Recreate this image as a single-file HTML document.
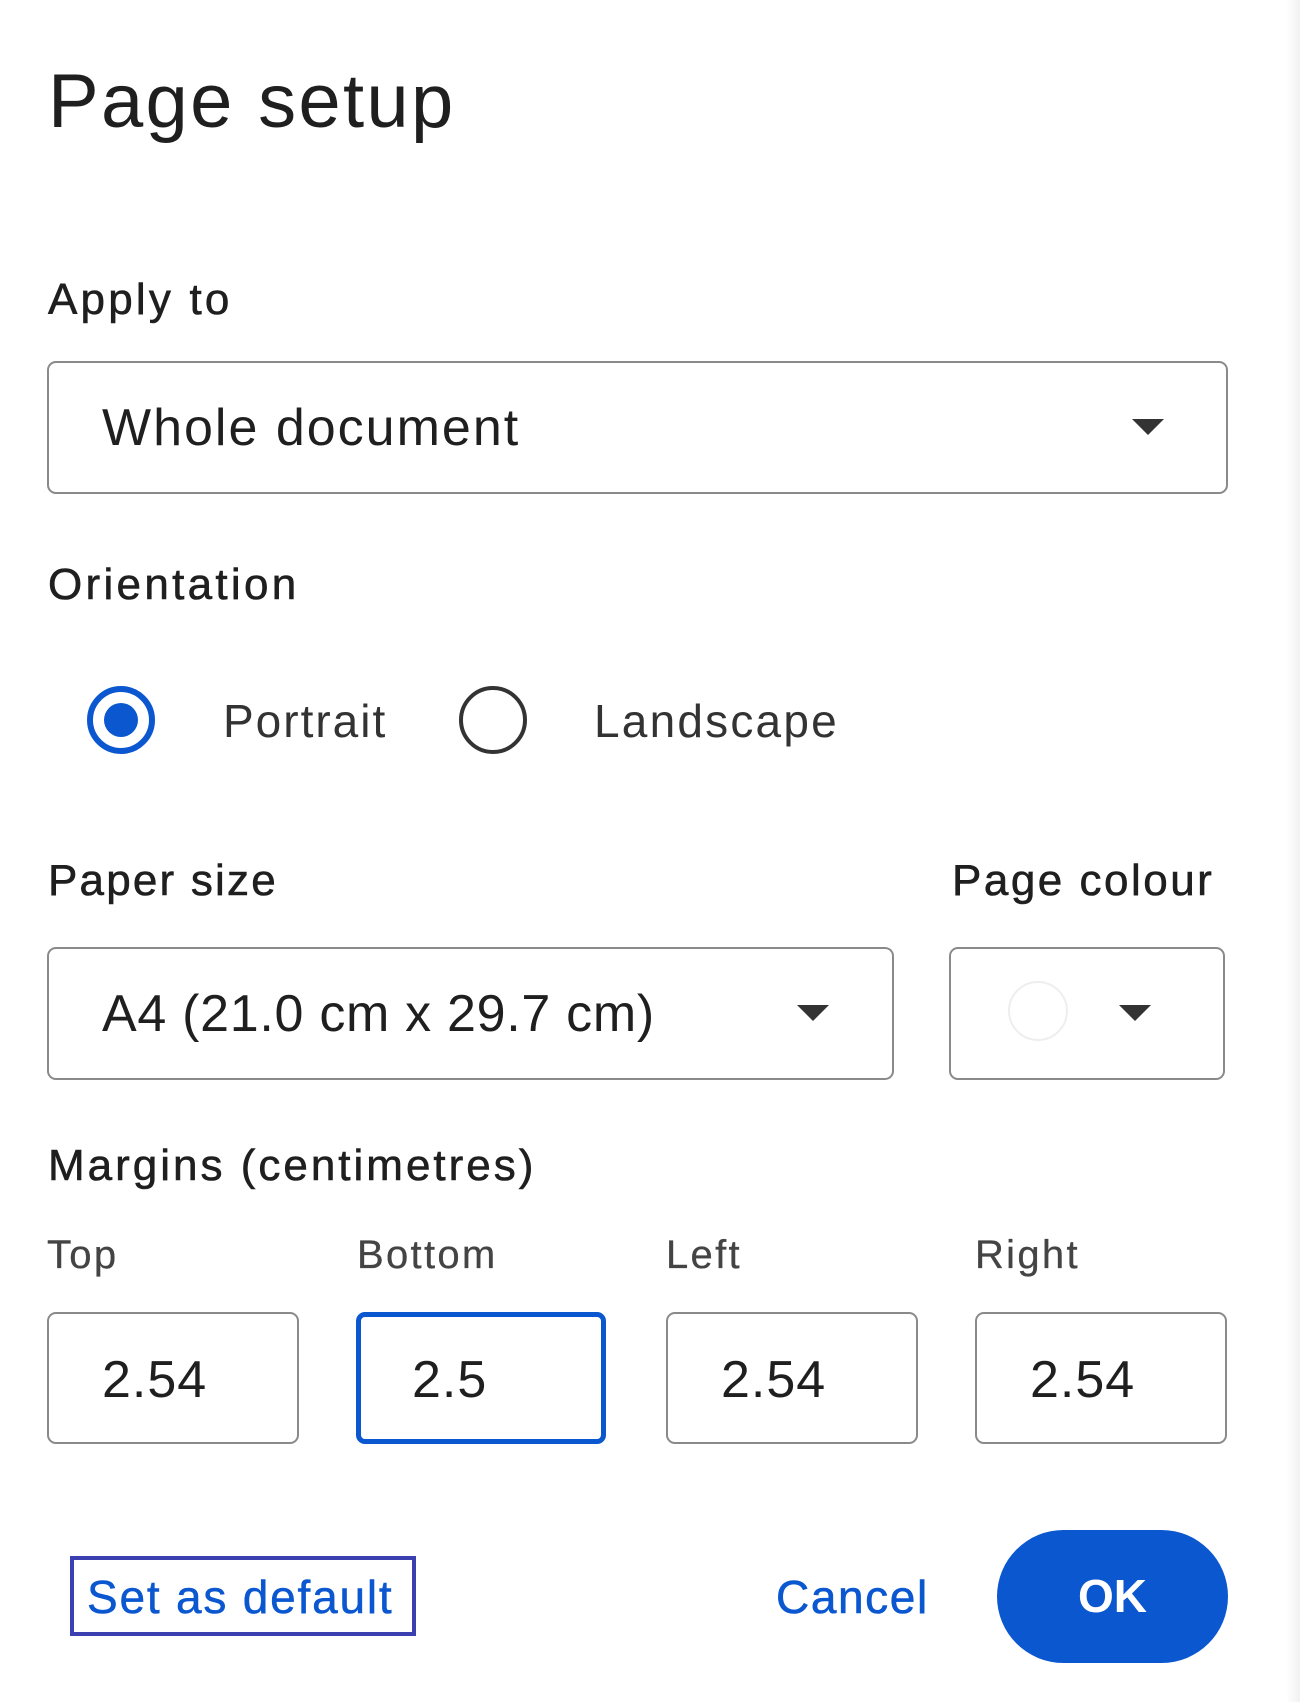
<!DOCTYPE html>
<html><head><meta charset="utf-8"><style>
body{margin:0;width:1300px;height:1702px;background:#fff;position:relative;overflow:hidden;font-family:"Liberation Sans",sans-serif;color:#1f1f1f}
.a{position:absolute;white-space:nowrap}
.lbl{font-size:44px;-webkit-text-stroke:0.6px #1f1f1f;line-height:1;letter-spacing:2.6px}
.box{position:absolute;border:2px solid #8a8a8a;border-radius:9px;box-sizing:border-box}
.val{font-size:52px;line-height:1;position:absolute;letter-spacing:1px}
.arr{position:absolute;width:0;height:0;border-left:16px solid transparent;border-right:16px solid transparent;border-top:16px solid #333}
.sm{font-size:40px;color:#444;-webkit-text-stroke:0.3px #444;line-height:1;letter-spacing:2.3px}
</style></head><body>
<div style="position:absolute;right:0;top:0;width:14px;height:1702px;background:linear-gradient(to right,#fff,#f1f1f1)"></div>
<div class="a" style="left:48px;top:64px;font-size:76px;line-height:1;letter-spacing:2.3px">Page setup</div>
<div class="a lbl" style="left:48px;top:278px;letter-spacing:3.2px">Apply to</div>
<div class="box" style="left:47px;top:361px;width:1181px;height:133px"><span class="val" style="left:53px;top:39px;letter-spacing:2px">Whole document</span><div class="arr" style="left:1083px;top:56px"></div></div>
<div class="a lbl" style="left:48px;top:563px;letter-spacing:3.3px">Orientation</div>
<div class="a" style="left:87px;top:686px;width:68px;height:68px;border:6px solid #0b57d0;border-radius:50%;box-sizing:border-box"><div style="position:absolute;left:11px;top:11px;width:34px;height:34px;border-radius:50%;background:#0b57d0"></div></div>
<div class="a" style="left:223px;top:698px;font-size:46px;color:#333;line-height:1;letter-spacing:2px">Portrait</div>
<div class="a" style="left:459px;top:686px;width:68px;height:68px;border:4px solid #333;border-radius:50%;box-sizing:border-box"></div>
<div class="a" style="left:594px;top:698px;font-size:46px;color:#333;line-height:1;letter-spacing:2.2px">Landscape</div>
<div class="a lbl" style="left:48px;top:859px;letter-spacing:2.2px">Paper size</div>
<div class="a lbl" style="left:952px;top:859px;letter-spacing:2.5px">Page colour</div>
<div class="box" style="left:47px;top:947px;width:847px;height:133px"><span class="val" style="left:53px;top:39px;letter-spacing:0.7px">A4 (21.0 cm x 29.7 cm)</span><div class="arr" style="left:748px;top:56px"></div></div>
<div class="box" style="left:949px;top:947px;width:276px;height:133px"><div style="position:absolute;left:57px;top:32px;width:60px;height:60px;border:2px solid #eee;border-radius:50%;box-sizing:border-box"></div><div class="arr" style="left:168px;top:56px"></div></div>
<div class="a lbl" style="left:48px;top:1144px;letter-spacing:3px">Margins (centimetres)</div>
<div class="a sm" style="left:47px;top:1235px">Top</div>
<div class="a sm" style="left:357px;top:1235px">Bottom</div>
<div class="a sm" style="left:666px;top:1235px">Left</div>
<div class="a sm" style="left:975px;top:1235px">Right</div>
<div class="box" style="left:47px;top:1312px;width:252px;height:132px"><span class="val" style="left:53px;top:40px">2.54</span></div>
<div class="box" style="left:356px;top:1312px;width:250px;height:132px;border:5px solid #0b57d0"><span class="val" style="left:51px;top:37px">2.5</span></div>
<div class="box" style="left:666px;top:1312px;width:252px;height:132px"><span class="val" style="left:53px;top:40px">2.54</span></div>
<div class="box" style="left:975px;top:1312px;width:252px;height:132px"><span class="val" style="left:53px;top:40px">2.54</span></div>
<div class="a" style="left:70px;top:1556px;width:346px;height:80px;border:4px solid #3b3fb0;box-sizing:border-box"></div>
<div class="a" style="left:87px;top:1574px;font-size:46px;color:#0b57d0;-webkit-text-stroke:0.5px #0b57d0;line-height:1;letter-spacing:1.8px">Set as default</div>
<div class="a" style="left:776px;top:1574px;font-size:46px;color:#0b57d0;-webkit-text-stroke:0.6px #0b57d0;line-height:1;letter-spacing:1.6px">Cancel</div>
<div class="a" style="left:997px;top:1530px;width:231px;height:133px;border-radius:67px;background:#0b57d0;color:#fff;font-size:46px;font-weight:bold;text-align:center;line-height:133px">OK</div>
</body></html>
